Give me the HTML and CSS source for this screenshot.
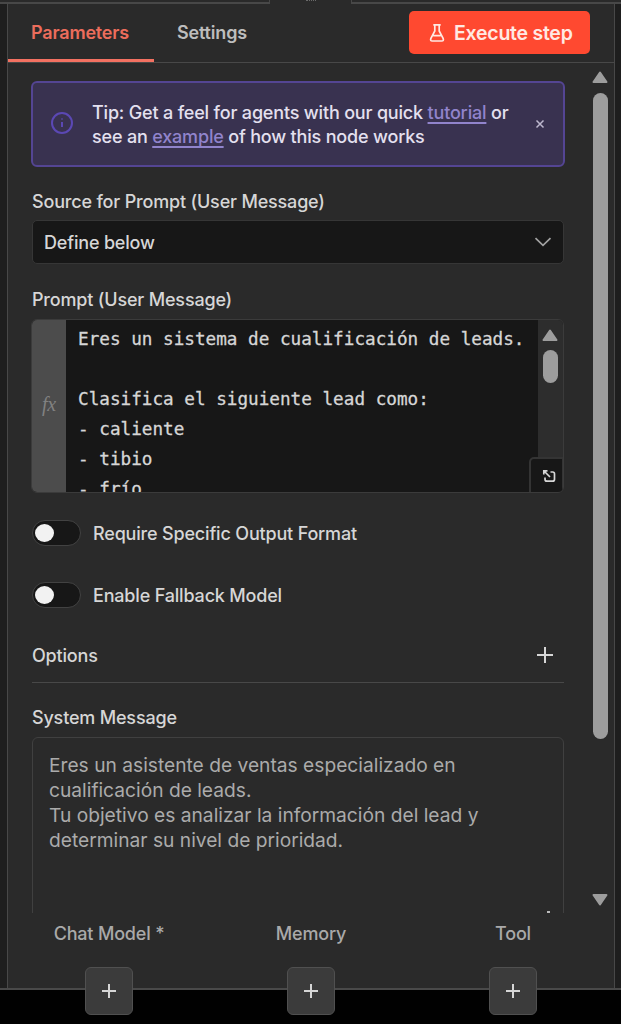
FILE: index.html
```html
<!DOCTYPE html>
<html lang="es">
  <head>
    <meta charset="UTF-8" />
    <meta name="viewport" content="width=device-width, initial-scale=1.0" />
    <title>AI Agent</title>
    <link rel="stylesheet" href="styles.css">
  </head>
  <body>
    <div class="handle">
      <span class="handle-left"></span>
      <span class="handle-grip"><i></i></span>
      <span class="handle-right"></span>
    </div>
    <main class="panel">
      <header>
        <nav>
          <a class="tab active">Parameters</a>
          <a class="tab">Settings</a>
        </nav>
        <button class="execute">
          <svg width="16" height="20" viewBox="0 0 16 20">
            <path d="M4.3 1.8h7.4M5.8 2v6L1.9 15.400q-1 2.500 1.400 2.600h9.400q2.400-.1 1.400-2.600L10.200 8V2M4.200 12.600h7.600" />
          </svg>
          <span>Execute step</span>
        </button>
      </header>

      <div class="body">
        <section class="content">
          <div class="tip">
            <svg class="info" width="24" height="24" viewBox="0 0 24 24">
              <circle cx="12" cy="12" r="10" />
              <path d="M12 11v5M12 7.600v1" />
            </svg>
            <p>
              Tip: Get a feel for agents with our quick <a>tutorial</a> or<br />
              see an <a>example</a> of how this node works
            </p>
            <svg class="close" width="10" height="10" viewBox="0 0 10 10">
              <path d="M1.500 1.500l7 7M8.500 1.500l-7 7" />
            </svg>
          </div>

          <h2 class="label source">Source for Prompt (User Message)</h2>
          <div class="select">
            <span>Define below</span>
            <svg width="18" height="10" viewBox="0 0 18 10">
              <path d="M1.500 1.200L9 8.400l7.500-7.200" />
            </svg>
          </div>

          <h2 class="label prompt">Prompt (User Message)</h2>
          <div class="editor">
            <div class="fx">fx</div>
            <pre>Eres un sistema de cualificación de leads.

Clasifica el siguiente lead como:
- caliente
- tibio
- frío</pre>
            <div class="track">
              <svg width="18" height="14" viewBox="0 0 18 14">
                <path d="M9 2.500L15.500 12h-13z" />
              </svg>
              <div class="thumb"></div>
            </div>
            <div class="expand">
              <svg width="14" height="14" viewBox="0 0 14 14">
                <path d="M1.800 5.500V1.800H5.500M2 2l6 6M8.500 3h2.200q1.800 0 1.800 1.800v5.400q0 2-2 2H5q-2 0-2-2V8.500" />
              </svg>
            </div>
          </div>

          <div class="toggle">
            <i></i>
            <span>Require Specific Output Format</span>
          </div>
          <div class="toggle second">
            <i></i>
            <span>Enable Fallback Model</span>
          </div>

          <div class="options">
            <span>Options</span>
            <svg width="16" height="16" viewBox="0 0 16 16">
              <path d="M8 0v16M0 8h16" />
            </svg>
          </div>

          <h2 class="label system">System Message</h2>
          <div class="textarea">
            <p>
              Eres un asistente de ventas especializado en<br />
              cualificación de leads.<br />
              Tu objetivo es analizar la información del lead y<br />
              determinar su nivel de prioridad.
            </p>
            <b class="resizer"></b>
          </div>
        </section>
        <aside class="scrollbar">
          <svg width="18" height="14" viewBox="0 0 18 14">
            <path d="M9 2.500L15.500 12h-13z" />
          </svg>
          <div class="thumb"></div>
          <svg class="down" width="18" height="14" viewBox="0 0 18 14">
            <path d="M9 11.500L15.500 2h-13z" />
          </svg>
        </aside>
      </div>

      <footer>
        <div class="connector">
          <span>Chat Model *</span>
          <button><svg width="14" height="14" viewBox="0 0 14 14"><path d="M7 0v14M0 7h14" /></svg></button>
        </div>
        <div class="connector">
          <span>Memory</span>
          <button><svg width="14" height="14" viewBox="0 0 14 14"><path d="M7 0v14M0 7h14" /></svg></button>
        </div>
        <div class="connector">
          <span>Tool</span>
          <button><svg width="14" height="14" viewBox="0 0 14 14"><path d="M7 0v14M0 7h14" /></svg></button>
        </div>
      </footer>
    </main>
  </body>
</html>
```
FILE: styles.css
```css
* {
  box-sizing: border-box;
}
body {
  margin: 0;
  height: 1024px;
  overflow: hidden;
  background: linear-gradient(#1e1e1e 988px, #494949 988px, #494949 990px, #010101 990px);
  font-family: Inter, sans-serif;
  font-size: 18px;
  font-weight: 500;
  letter-spacing: -0.18px;
  color: #d6d6d6;
}
svg {
  display: block;
  flex-shrink: 0;
  fill: none;
  stroke: currentColor;
  stroke-width: 2;
}
button {
  border: 0;
  padding: 0;
  font: inherit;
}

/* drag handle above the panel */
.handle {
  display: flex;
  height: 4px;
  background: #2a2a2a;
}
.handle-left {
  width: 270px;
  border-bottom: 2px solid #484848;
  border-right: 1px solid #484848;
}
.handle-grip {
  width: 81px;
}
.handle-grip i {
  display: block;
  width: 10px;
  margin: 0 auto;
  border-top: 1px dotted #6a6a6a;
}
.handle-right {
  flex: 1;
  border-bottom: 2px solid #484848;
  border-left: 1px solid #484848;
}

.panel {
  width: 608px;
  height: 984px;
  margin-left: 7px;
  border: 1px solid #484848;
  border-top: 0;
  border-bottom: 0;
  background: #2a2a2a;
}
header {
  display: flex;
  justify-content: space-between;
  height: 59px;
  padding-right: 24px;
  border-bottom: 1px solid #484848;
}
nav {
  display: flex;
}
.tab {
  height: 58px;
  padding: 18px 23px 0 23px;
  font-weight: 600;
  line-height: 22px;
  color: #bdbdbd;
}
.active {
  width: 146px;
  color: #ec6d5c;
  border-bottom: 3px solid #f37161;
}
.execute {
  display: flex;
  align-items: center;
  gap: 9px;
  width: 181px;
  height: 43px;
  margin-top: 7px;
  padding-left: 20px;
  border-radius: 5px;
  background: #ff4930;
  color: #ffe9e3;
  font-size: 19.5px;
  font-weight: 600;
  letter-spacing: -0.25px;
}
.execute svg {
  stroke-width: 1.7;
}

.body {
  display: flex;
  height: 850px;
  overflow: hidden;
}
.content {
  width: 557px;
  padding: 18px 0 0 24px;
}
.tip {
  display: flex;
  align-items: center;
  width: 534px;
  height: 86px;
  margin-left: -1px;
  padding: 0 18px 0 17px;
  border: 2px solid #544593;
  border-radius: 6px;
  background: #393250;
  color: #e4e0ef;
}
.info {
  margin-top: -2px;
  color: #5b48b4;
}
.tip p {
  flex: 1;
  margin: 1px 0 0 18px;
  line-height: 24px;
  white-space: nowrap;
}
.tip a {
  color: #9184cc;
  text-decoration: underline;
  text-decoration-thickness: 2px;
  text-underline-offset: 3px;
  text-decoration-skip-ink: none;
}
.close {
  color: #bdb8ce;
  stroke-width: 1.5;
}

.label {
  margin: 0;
  font-size: 18px;
  font-weight: 500;
  line-height: 22px;
}
.source {
  margin-top: 24px;
}
.select {
  display: flex;
  align-items: center;
  justify-content: space-between;
  width: 532px;
  height: 44px;
  margin-top: 7px;
  padding: 0 11px;
  border: 1px solid #363636;
  border-radius: 5px;
  background: #171717;
}
.select svg {
  color: #a2a2a2;
  stroke-width: 1.7;
}
.prompt {
  margin-top: 25px;
}
.editor {
  position: relative;
  display: flex;
  width: 533px;
  height: 174px;
  margin: 8px 0 0 -1px;
  overflow: hidden;
  border: 1px solid #3b3b3b;
  border-radius: 6px;
  background: #171717;
}
.fx {
  width: 34px;
  padding-top: 71px;
  text-align: center;
  background: #4c4c4c;
  color: #818181;
  font: italic 20px/26px "Liberation Serif", serif;
}
.editor pre {
  width: 472px;
  margin: 0;
  padding: 4px 0 0 12px;
  font: 17.66px/30px "DejaVu Sans Mono", monospace;
  letter-spacing: 0;
  -webkit-text-stroke: 0.3px;
}
.track {
  flex: 1;
  padding: 8px 0 0 3px;
  background: #2d2d2d;
}
.track svg,
.scrollbar svg {
  fill: #9d9d9d;
  stroke: #9d9d9d;
  stroke-linejoin: round;
}
.track .thumb {
  width: 15px;
  height: 33px;
  margin: 8px 0 0 2px;
}
.thumb {
  border-radius: 8px;
  background: #9d9d9d;
}
.expand {
  position: absolute;
  right: 0;
  bottom: 0;
  display: flex;
  align-items: center;
  justify-content: center;
  width: 34px;
  height: 35px;
  padding-left: 4px;
  border: 2px solid #343434;
  border-right-width: 1px;
  border-bottom: 0;
  border-radius: 5px 0 0 0;
  background: #171717;
}
.expand svg {
  stroke-width: 1.7;
}

.toggle {
  display: flex;
  align-items: center;
  gap: 12px;
  height: 26px;
  margin-top: 27px;
}
.toggle i {
  width: 49px;
  height: 26px;
  padding: 3px 2px;
  border: 1px solid #424242;
  border-radius: 13px;
  background: #171717;
}
.toggle i::before {
  content: "";
  display: block;
  width: 19px;
  height: 18px;
  border-radius: 50%;
  background: #f2f2f2;
}
.second {
  margin-top: 36px;
}
.options {
  display: flex;
  align-items: center;
  justify-content: space-between;
  width: 532px;
  height: 55px;
  margin-top: 20px;
  padding: 0 11px 0 0;
  border-bottom: 1px solid #484848;
}
.system {
  margin-top: 24px;
}
.textarea {
  position: relative;
  width: 532px;
  height: 182px;
  margin-top: 8px;
  padding: 15px 16px;
  border: 1px solid #404040;
  border-radius: 6px;
  color: #ababab;
  font-size: 19.2px;
  font-weight: 400;
  letter-spacing: 0;
}
.textarea p {
  margin: 0;
  line-height: 25px;
  white-space: nowrap;
}
.resizer {
  position: absolute;
  right: 13px;
  top: 173px;
  width: 3px;
  height: 2px;
  background: #bbb;
}

.scrollbar {
  width: 49px;
  padding: 7px 0 0 26px;
}
.scrollbar .thumb {
  width: 15px;
  height: 646px;
  margin: 9px 0 0 2px;
}
.scrollbar .down {
  margin-top: 154px;
}

footer {
  display: flex;
  gap: 52px;
  padding: 10px 0 0 26px;
  color: #a9a9a9;
}
.connector {
  display: flex;
  flex-direction: column;
  align-items: center;
  width: 150px;
  line-height: 22px;
}
.connector button {
  display: flex;
  align-items: center;
  justify-content: center;
  width: 48px;
  height: 48px;
  margin-top: 22px;
  border: 1px solid #505050;
  border-radius: 6px;
  background: #3b3b3b;
  color: #d6d6d6;
}
```
